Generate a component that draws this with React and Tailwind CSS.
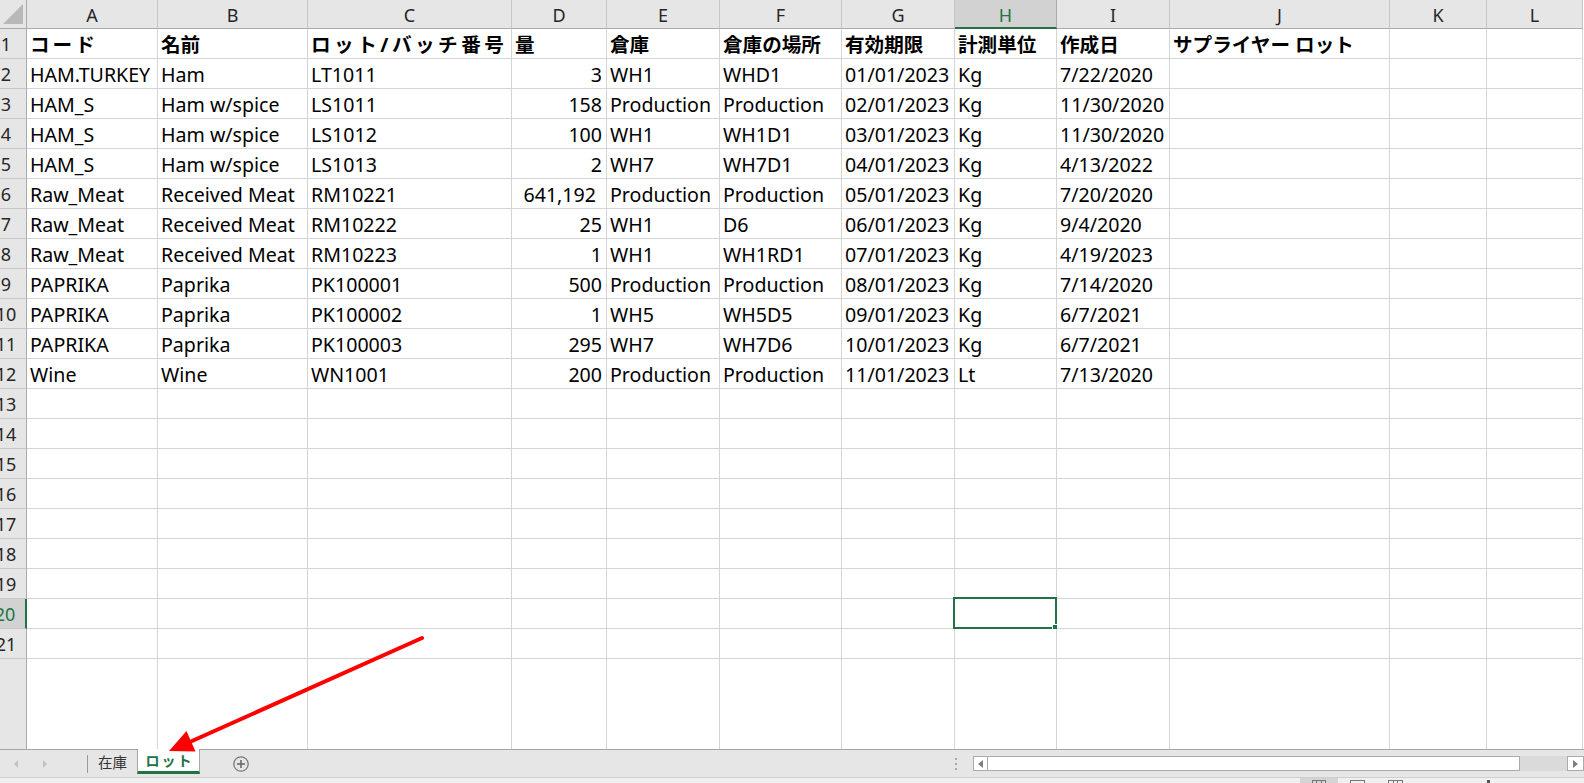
import React from "react";

const COLS = ["A", "B", "C", "D", "E", "F", "G", "H", "I", "J", "K", "L"];
const GRID =
  "grid grid-cols-[27px_131px_150px_204px_95px_113px_122px_113px_102px_113px_220px_97px_96px]";

const DATA = [
  ["コード", "名前", "ロット/バッチ番号", "量", "倉庫", "倉庫の場所", "有効期限", "計測単位", "作成日", "サプライヤー ロット", "", ""],
  ["HAM.TURKEY", "Ham", "LT1011", "3", "WH1", "WHD1", "01/01/2023", "Kg", "7/22/2020", "", "", ""],
  ["HAM_S", "Ham w/spice", "LS1011", "158", "Production", "Production", "02/01/2023", "Kg", "11/30/2020", "", "", ""],
  ["HAM_S", "Ham w/spice", "LS1012", "100", "WH1", "WH1D1", "03/01/2023", "Kg", "11/30/2020", "", "", ""],
  ["HAM_S", "Ham w/spice", "LS1013", "2", "WH7", "WH7D1", "04/01/2023", "Kg", "4/13/2022", "", "", ""],
  ["Raw_Meat", "Received Meat", "RM10221", "641,192", "Production", "Production", "05/01/2023", "Kg", "7/20/2020", "", "", ""],
  ["Raw_Meat", "Received Meat", "RM10222", "25", "WH1", "D6", "06/01/2023", "Kg", "9/4/2020", "", "", ""],
  ["Raw_Meat", "Received Meat", "RM10223", "1", "WH1", "WH1RD1", "07/01/2023", "Kg", "4/19/2023", "", "", ""],
  ["PAPRIKA", "Paprika", "PK100001", "500", "Production", "Production", "08/01/2023", "Kg", "7/14/2020", "", "", ""],
  ["PAPRIKA", "Paprika", "PK100002", "1", "WH5", "WH5D5", "09/01/2023", "Kg", "6/7/2021", "", "", ""],
  ["PAPRIKA", "Paprika", "PK100003", "295", "WH7", "WH7D6", "10/01/2023", "Kg", "6/7/2021", "", "", ""],
  ["Wine", "Wine", "WN1001", "200", "Production", "Production", "11/01/2023", "Lt", "7/13/2020", "", "", ""],
];

while (DATA.length < 21) DATA.push(COLS.map(() => ""));

const FONT = "font-['Noto_Sans','Noto_Sans_CJK_JP',sans-serif]";

function HeaderRow() {
  return (
    <div className={GRID}>
      <div className="h-[29px] bg-[#e6e6e6] border-r border-b border-[#ababab] relative">
        <svg width="26" height="28" className="block">
          <polygon points="3,24 23,24 23,4" fill="#b8b8b8" />
        </svg>
      </div>
      {COLS.map((c, i) => (
        <div
          key={c}
          className={
            i === 7
              ? "h-[29px] bg-[#d2d2d2] border-r border-[#ababab] border-b-2 border-b-[#217346] flex justify-center pt-[2px] text-[18px] text-[#217346]"
              : "h-[29px] bg-[#e6e6e6] border-r border-[#c6c6c6] border-b border-b-[#ababab] flex justify-center pt-[2px] text-[18px] text-[#262626]"
          }
        >
          {c}
        </div>
      ))}
    </div>
  );
}

function trackingFor(v) {
  if (v === "コード") return " tracking-[3px]";
  if (v === "ロット/バッチ番号") return " tracking-[3.5px]";
  return "";
}

function DataRow({ row, r }) {
  const selected = r === 20;
  return (
    <div className={GRID}>
      <div
        className={
          selected
            ? "h-[30px] bg-[#d2d2d2] border-b border-[#c6c6c6] border-r-2 border-r-[#217346] flex justify-end items-center overflow-hidden text-[18px] text-[#217346]"
            : "h-[30px] bg-[#e6e6e6] border-b border-[#c6c6c6] border-r border-r-[#ababab] flex justify-end items-center overflow-hidden text-[18px] text-[#262626]"
        }
      >
        <div className="w-[40px] shrink-0 text-center pt-[1px]">{r}</div>
      </div>
      {row.map((v, i) => {
        const isNum = r > 1 && i === 3;
        const wide = v === "641,192";
        return (
          <div
            key={i}
            className={
              "h-[30px] border-r border-b border-[#d4d4d4] bg-white flex items-center whitespace-nowrap relative text-[19.6px] text-black pt-[2px] " +
              (isNum ? (wide ? "justify-end pr-[10px]" : "justify-end pr-[4px]") : "pl-[3px]") +
              (r === 1 ? " font-bold" + trackingFor(v) : "")
            }
          >
            {v}
            {selected && i === 7 && (
              <div className="absolute -left-[2px] -top-[2px] -right-[1px] -bottom-[1px] border-2 border-[#217346]">
                <div className="absolute -right-[4px] -bottom-[4px] w-[7px] h-[7px] bg-[#217346] border border-white" />
              </div>
            )}
          </div>
        );
      })}
    </div>
  );
}

function Filler() {
  return (
    <div className={GRID + " flex-1"}>
      <div className="bg-[#e6e6e6] border-r border-[#ababab]" />
      {COLS.map((c) => (
        <div key={c} className="border-r border-[#d4d4d4] bg-white" />
      ))}
    </div>
  );
}

function TabBar() {
  return (
    <div className="h-[28px] border-t border-[#a6a6a6] bg-[#e6e6e6] flex">
      <div className="w-[87px] flex items-center">
        <svg width="87" height="26" className="block">
          <polygon points="14,13 18,9 18,17" fill="#c2c2c2" />
          <polygon points="47,13 43,9 43,17" fill="#c2c2c2" />
        </svg>
      </div>
      <div className="w-px h-[18px] mt-[5px] bg-[#9a9a9a]" />
      <div className="w-[49px] flex items-center justify-center text-[14.5px] text-[#333] pb-[1px]">在庫</div>
      <div className="-mt-px h-[25px] w-[63px] bg-white border-l border-r border-[#a6a6a6] border-b-[3px] border-b-[#217346] flex items-center justify-center font-bold text-[14px] text-[#217346] tracking-[2px] pl-[2px]">
        ロット
      </div>
      <div className="ml-[33px] self-center w-[16px] h-[16px]">
        <svg width="16" height="16" viewBox="0 0 16 16" className="block">
          <circle cx="8" cy="8" r="7.2" fill="none" stroke="#7a7a7a" strokeWidth="1.3" />
          <line x1="4" y1="8" x2="12" y2="8" stroke="#6a6a6a" strokeWidth="1.6" />
          <line x1="8" y1="4" x2="8" y2="12" stroke="#6a6a6a" strokeWidth="1.6" />
        </svg>
      </div>
      <div className="flex-1" />
      <div className="w-[2px] mr-[16px] flex flex-col gap-[3px] mt-[8px]">
        <div className="w-[2px] h-[2px] bg-[#a8a8a8]" />
        <div className="w-[2px] h-[2px] bg-[#a8a8a8]" />
        <div className="w-[2px] h-[2px] bg-[#a8a8a8]" />
      </div>
      <div className="w-[611px] h-[15px] mt-[6px] flex">
        <div className="w-[15px] h-full border border-[#ababab] bg-white flex items-center justify-center">
          <svg width="5" height="8" className="block">
            <polygon points="0,4 5,0 5,8" fill="#7f7f7f" />
          </svg>
        </div>
        <div className="w-[532px] h-full border-y border-r border-[#ababab] bg-white" />
        <div className="flex-1 h-full bg-[#dadada]" />
        <div className="w-[17px] h-full border border-[#ababab] bg-white flex items-center justify-center">
          <svg width="5" height="8" className="block">
            <polygon points="5,4 0,0 0,8" fill="#7f7f7f" />
          </svg>
        </div>
      </div>
    </div>
  );
}

function StatusBar() {
  return (
    <div className="h-[6px] border-t border-[#cfcfcf] bg-[#f0f0f0] flex overflow-hidden">
      <div className="w-[1300px]" />
      <div className="w-[38px] h-full bg-[#d4d4d4] flex justify-center pt-[2px]">
        <div className="w-[14px] h-[8px] border border-[#777] flex justify-evenly">
          <div className="w-px h-full bg-[#777]" />
          <div className="w-px h-full bg-[#777]" />
        </div>
      </div>
      <div className="w-[12px]" />
      <div className="w-[15px] pt-[2px]">
        <div className="w-[15px] h-[8px] border border-[#777]" />
      </div>
      <div className="w-[23px]" />
      <div className="w-[15px] pt-[2px]">
        <div className="w-[15px] h-[8px] border border-[#777] flex justify-evenly">
          <div className="w-px h-full bg-[#777]" />
          <div className="w-px h-full bg-[#777]" />
        </div>
      </div>
      <div className="w-[84px]" />
      <div className="w-[3px] pt-[2px]">
        <div className="w-[3px] h-[8px] bg-[#555]" />
      </div>
    </div>
  );
}

export default function App() {
  return (
    <div className={"w-[1584px] h-[783px] overflow-hidden relative bg-white flex flex-col " + FONT}>
      <div className="flex-1 flex flex-col">
        <HeaderRow />
        {DATA.map((row, i) => (
          <DataRow key={i} row={row} r={i + 1} />
        ))}
        <Filler />
      </div>
      <TabBar />
      <StatusBar />
      <svg
        className="absolute left-0 top-0 pointer-events-none"
        width="1584"
        height="783"
      >
        <line x1="422" y1="638" x2="192" y2="741" stroke="#ff0000" strokeWidth="4" strokeLinecap="round" />
        <polygon points="169,751 195.5,751.5 186.5,731" fill="#ff0000" />
      </svg>
    </div>
  );
}
